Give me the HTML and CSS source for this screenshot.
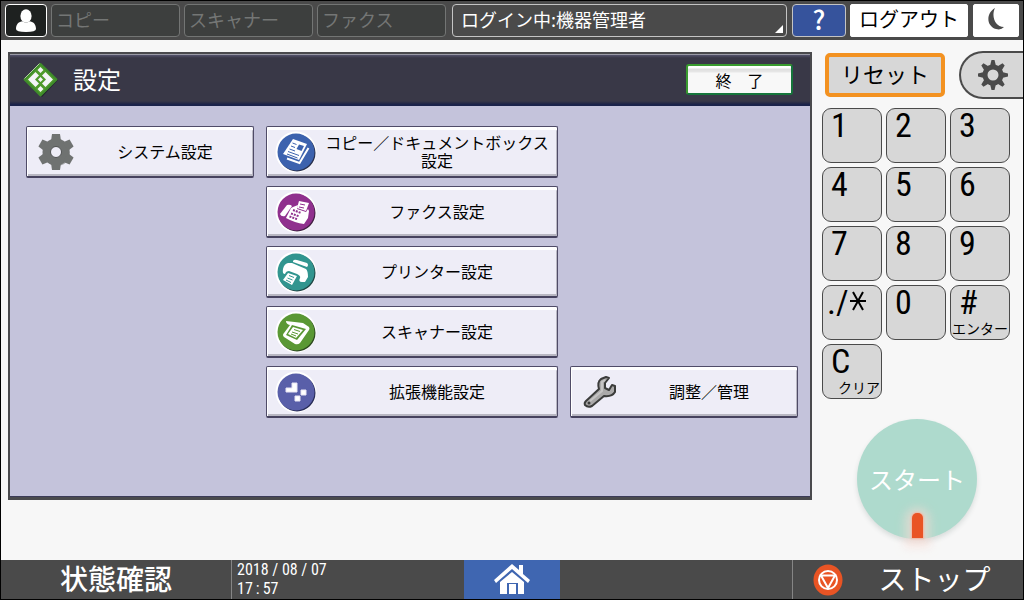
FILE: index.html
```html
<!DOCTYPE html>
<html lang="ja">
<head>
<meta charset="utf-8">
<meta name="viewport" content="width=device-width, initial-scale=1">
<title>設定</title>
<link rel="stylesheet" href="styles.css">
</head>
<body>
<div class="screen">
  <header class="topbar">
    <button class="user" type="button" aria-label="ユーザー">
      <svg width="24" height="26" viewBox="0 0 24 26" fill="#fff"><ellipse cx="12" cy="8" rx="5.6" ry="6.8"/><path d="M2 21C2 16 5 13.600 8.500 13.300Q12 16 15.500 13.300C19 13.600 22 16 22 21Q22 24 12 24T2 21Z"/></svg>
    </button>
    <button class="tab" type="button" disabled>コピー</button>
    <button class="tab" type="button" disabled>スキャナー</button>
    <button class="tab" type="button" disabled>ファクス</button>
    <button class="login" type="button">ログイン中:機器管理者</button>
    <button class="help" type="button">?</button>
    <button class="logout" type="button">ログアウト</button>
    <button class="sleep" type="button" aria-label="スリープ">
      <svg width="18" height="24" viewBox="0 0 18 24"><path d="M8 1C-1 6-1 19 9 22Q14 23.500 17 20C8 20 4 9 8 1Z" fill="#4a4a4a"/></svg>
    </button>
  </header>

  <div class="content">
    <main class="panel">
      <div class="panel-head">
        <svg width="36" height="36" viewBox="0 0 36 36">
          <path d="M19 2.500L35 18 19 35 3 20Z" fill="#20222b"/>
          <path d="M17.500 2L33.500 17.500 17.500 33.500 1.500 17.500Z" fill="#4f9a2c" stroke="#3f8c2b" stroke-width="2" stroke-linejoin="round"/>
          <path d="M16.500 1.500L1.500 16.500" stroke="#b3cfa2" stroke-width="1"/>
          <path d="M17.500 5L20.500 8 17.500 11 14.500 8Z M17.500 24L20.500 27 17.500 30 14.500 27Z" fill="#f4f4f8"/>
          <path d="M12.500 10L16 13.500 12 17.500 16 21.500 12.500 25 5 17.500Z M22.500 10L30 17.500 22.500 25 19 21.500 23 17.500 19 13.500Z M17.500 15L20 17.500 17.500 20 15 17.500Z" fill="#f4f4f8"/>
        </svg>
        <h1>設定</h1>
        <button class="done" type="button">終　了</button>
      </div>

      <div class="menu">
        <div class="column">
          <button class="item" type="button">
            <svg width="38" height="38" viewBox="0 0 38 38">
              <circle cx="20" cy="20" r="13" fill="#a9abae"/>
              <g fill="#6f7271"><circle cx="19" cy="19" r="13.500"/>
              <path d="M14 8L15 1H23L24 8Z"/><path d="M14 8L15 1H23L24 8Z" transform="rotate(60 19 19)"/><path d="M14 8L15 1H23L24 8Z" transform="rotate(120 19 19)"/><path d="M14 8L15 1H23L24 8Z" transform="rotate(180 19 19)"/><path d="M14 8L15 1H23L24 8Z" transform="rotate(240 19 19)"/><path d="M14 8L15 1H23L24 8Z" transform="rotate(300 19 19)"/></g>
              <circle cx="19" cy="19" r="5.500" fill="#eeedf7" stroke="#4f5151"/>
            </svg>
            <span>システム設定</span>
          </button>
        </div>

        <div class="column">
          <button class="item" type="button">
            <svg width="42" height="42" viewBox="0 0 42 42">
              <circle cx="21" cy="21" r="20.500" fill="#fff"/><circle cx="22" cy="22" r="18.500" fill="#29304e"/><circle cx="21" cy="21" r="18.500" fill="#3c62ae"/>
              <path d="M18 8L32 13 24 29 8 23Z" fill="#fff"/>
              <path d="M33.500 17L24.500 32 12 27.500" fill="none" stroke="#fff" stroke-width="2"/>
              <path d="M24 13.500L29 15 26.500 20 21.500 18Z" fill="#3c62ae"/>
              <path d="M17.500 12L21.500 13.500M16 15L20 16.500M14.500 18L20 20M13 20.500L24 24.500M12 23L22.500 27" stroke="#3c62ae"/>
            </svg>
            <span>コピー／ドキュメントボックス<br>設定</span>
          </button>
          <button class="item" type="button">
            <svg width="42" height="42" viewBox="0 0 42 42">
              <circle cx="21" cy="21" r="20.500" fill="#fff"/><circle cx="22" cy="22" r="18.500" fill="#412044"/><circle cx="21" cy="21" r="18.500" fill="#90308e"/>
              <path d="M12 14Q15 13 17 15L10 25Q6 26 5 23Z" fill="#fff"/>
              <path d="M18 16L23 14 22 18 31 21 33 18 34 20 33 27 29 33Q20 32 11 27Q13 23 16 17Z" fill="#fff"/>
              <path d="M24 10L34 12 31 20 22 17Z" fill="#fff"/>
              <path d="M25 13L30 14M24 16L29 17" stroke="#90308e"/>
              <path d="M18 19L26 22M16 22.500L24.500 25.500M14.500 25.500L23 28.500" stroke="#90308e" stroke-width="2" stroke-dasharray="2 1"/>
            </svg>
            <span>ファクス設定</span>
          </button>
          <button class="item" type="button">
            <svg width="42" height="42" viewBox="0 0 42 42">
              <circle cx="21" cy="21" r="20.500" fill="#fff"/><circle cx="22" cy="22" r="18.500" fill="#204646"/><circle cx="21" cy="21" r="18.500" fill="#31958f"/>
              <path d="M18 10Q19 8 22 9L32 12Q34 14 32 16L18 11Z" fill="#fff"/>
              <path d="M13 12H17L31 18Q33 20 33 26L30 31H27Q23 31 25 27Q26 25 22 23L14 20Q11 20 10 23Q7 23 8 18Q9 13 13 12Z" fill="#fff"/>
              <path d="M13 22L22 25 17 34 8 29Z" fill="#fff"/>
              <path d="M14 24.500L19 26.500M12.500 27L17.500 29M11 29L16 31.500" stroke="#31958f"/>
            </svg>
            <span>プリンター設定</span>
          </button>
          <button class="item" type="button">
            <svg width="42" height="42" viewBox="0 0 42 42">
              <circle cx="21" cy="21" r="20.500" fill="#fff"/><circle cx="22" cy="22" r="18.500" fill="#2c4721"/><circle cx="21" cy="21" r="18.500" fill="#5a9834"/>
              <path d="M11 10L28 12 34 16Q35 18 34 19L25 32Q23 34 20 33L9 26Q7 24 9 22L15 14Q11 13 11 10Z" fill="#fff"/>
              <path d="M17 14L31 18 22 29 11 24Z" fill="#5a9834"/>
              <path d="M18 16L28 19 21 27 13 23Z" fill="#fff"/>
              <path d="M19 18.500L25 20.500M17 21L23 23M16 23L21 25" stroke="#5a9834"/>
            </svg>
            <span>スキャナー設定</span>
          </button>
          <button class="item" type="button">
            <svg width="42" height="42" viewBox="0 0 42 42">
              <circle cx="21" cy="21" r="20.500" fill="#fff"/><circle cx="22" cy="22" r="18.500" fill="#292d58"/><circle cx="21" cy="21" r="18.500" fill="#595fa9"/>
              <path d="M17 12H22V21H11V17H17ZM26 19H31V24H26ZM20 25H25V30H20Z" fill="#fff" stroke="#e8e5f4"/>
            </svg>
            <span>拡張機能設定</span>
          </button>
        </div>

        <div class="column end">
          <button class="item" type="button">
            <svg width="38" height="38" viewBox="0 0 38 38">
              <path d="M5 28L18 16Q16 9 20 6L25 4 28 5 24 10V15L28 17 31 12 34 13V19Q31 24 23 23L11 33Q7 35 4 32Q3 30 5 28Z" fill="#aaa9a9" stroke="#3b3c3b" stroke-width="2" stroke-linejoin="round"/>
              <path d="M9 28L21 18V9L24 7" fill="none" stroke="#c5c4c4" stroke-width="2"/>
              <circle cx="8" cy="30" r="1.500" fill="#3b3c3b"/>
            </svg>
            <span>調整／管理</span>
          </button>
        </div>
      </div>
    </main>

    <aside class="side">
      <div class="side-top">
        <button class="reset" type="button">リセット</button>
        <button class="gear" type="button" aria-label="設定">
          <svg width="30" height="30" viewBox="0 0 30 30">
            <circle cx="15" cy="15" r="8" fill="none" stroke="#4a4a4a" stroke-width="5"/>
            <g fill="#4a4a4a"><path d="M12 6L13.500 0H16.500L18 6Z"/><path d="M12 6L13.500 0H16.500L18 6Z" transform="rotate(45 15 15)"/><path d="M12 6L13.500 0H16.500L18 6Z" transform="rotate(90 15 15)"/><path d="M12 6L13.500 0H16.500L18 6Z" transform="rotate(135 15 15)"/><path d="M12 6L13.500 0H16.500L18 6Z" transform="rotate(180 15 15)"/><path d="M12 6L13.500 0H16.500L18 6Z" transform="rotate(225 15 15)"/><path d="M12 6L13.500 0H16.500L18 6Z" transform="rotate(270 15 15)"/><path d="M12 6L13.500 0H16.500L18 6Z" transform="rotate(315 15 15)"/></g>
          </svg>
        </button>
      </div>
      <div class="keypad">
        <button class="key" type="button">1</button>
        <button class="key" type="button">2</button>
        <button class="key" type="button">3</button>
        <button class="key" type="button">4</button>
        <button class="key" type="button">5</button>
        <button class="key" type="button">6</button>
        <button class="key" type="button">7</button>
        <button class="key" type="button">8</button>
        <button class="key" type="button">9</button>
        <button class="key symbol" type="button">./<svg width="18" height="30" viewBox="0 0 18 30" role="img" aria-label="アスタリスク"><path d="M1 15H17M4 6L14 24M14 6L4 24" stroke="#000" stroke-width="2"/></svg></button>
        <button class="key" type="button">0</button>
        <button class="key" type="button">#<small>エンター</small></button>
        <button class="key" type="button">C<small>クリア</small></button>
      </div>
      <button class="start" type="button">スタート<i class="lamp"></i></button>
    </aside>
  </div>

  <footer class="bottombar">
    <button class="status" type="button">状態確認</button>
    <time class="clock" datetime="2018-08-07T17:57">2018 / 08 / 07<br>17&thinsp;:&thinsp;57</time>
    <button class="home" type="button" aria-label="ホーム">
      <svg width="36" height="31" viewBox="0 0 36 31" fill="#fff"><path d="M0 16L18 0 25 6V1H29V10L36 16 34 19 18 5 2 19Z"/><path d="M6 18L18 8 30 18V30H24V19H13V30H6Z"/><path d="M15 20H22V30H15Z"/></svg>
    </button>
    <button class="stop" type="button">
      <svg width="30" height="32" viewBox="0 0 30 32"><ellipse cx="15" cy="16" rx="14.500" ry="15.500" fill="#e95424"/><circle cx="15" cy="16" r="9" fill="none" stroke="#fff" stroke-width="2"/><path d="M8 11.500H22L15 24Z" fill="none" stroke="#fff" stroke-width="2"/></svg>
      <span>ストップ</span>
    </button>
  </footer>
</div>
</body>
</html>
```

FILE: styles.css
```css
* {
  box-sizing: border-box;
}

body {
  margin: 0;
  font-family: "Noto Sans CJK JP", sans-serif;
  color: #000;
}

button {
  margin: 0;
  padding: 0;
  border: 0;
  border-radius: 0;
  background: none;
  color: inherit;
  font: inherit;
}

svg {
  display: block;
  flex: none;
}

.screen {
  display: flex;
  flex-direction: column;
  min-height: 100vh;
  border: 1px solid #000;
  background: #f7f7f7;
}

/* Top bar */
.topbar {
  display: grid;
  grid-template-columns: 42px 129fr 129fr 129fr 338fr 54px 118px 47px;
  gap: 4px;
  padding: 3px 4px;
  height: 39px;
  background: #4a4a4a;
  font-size: 18px;
  line-height: 26px;
}

.topbar button {
  padding-bottom: 4px;
  border: 1px solid #c4c4c4;
  border-radius: 4px;
}

.topbar .user {
  display: flex;
  align-items: center;
  justify-content: center;
  padding: 0;
  background: #1e2120;
  border-color: #fff;
}

.topbar .tab {
  padding-left: 4px;
  border-color: #737574;
  background: #3d3f3e;
  color: #747675;
  text-align: left;
}

.topbar .login {
  position: relative;
  margin: 0 1px 0 2px;
  padding-left: 8px;
  color: #fff;
  text-align: left;
}

.login::after {
  content: "";
  position: absolute;
  right: 3px;
  bottom: 3px;
  border: 4px solid #fff;
  border-top-color: transparent;
  border-left-color: transparent;
}

.topbar .help {
  background: #36539c;
  color: #fff;
  font-size: 26px;
  font-weight: 500;
}

.topbar .logout,
.topbar .sleep {
  border-color: #fff;
  border-radius: 2px;
  background: #fff;
  font-size: 20px;
}

.topbar .sleep {
  display: flex;
  align-items: center;
  justify-content: center;
  margin-left: 1px;
}

/* Content */
.content {
  display: flex;
  flex: 1;
  gap: 9px;
  padding: 12px 0 0 7px;
}

.panel {
  flex: 1;
  align-self: flex-start;
  border: 2px solid #4a4a4d;
  border-bottom-width: 3px;
  background: #c4c3db;
}

.panel-head {
  display: flex;
  align-items: center;
  gap: 14px;
  height: 52px;
  padding: 0 17px 0 13px;
  border-top: 1px solid #9a9aa6;
  border-bottom: 2px solid #1b234a;
  background: linear-gradient(#54526c, #393847 3px, #393847 46px, #1f2547);
}

.panel-head h1 {
  flex: 1;
  margin: 0;
  padding-bottom: 2px;
  color: #fff;
  font-size: 24px;
  font-weight: 400;
  line-height: 32px;
}

.done {
  width: 107px;
  height: 31px;
  border: 2px solid #15753b;
  border-radius: 3px;
  border-top-color: #399b2f;
  border-left-color: #399b2f;
  background: linear-gradient(#fff 2px, #dedede 3px, #e8e8e8 6px, #f8f8f8 7px);
  font-size: 16px;
  line-height: 26px;
}

.menu {
  display: grid;
  grid-template-columns: 228fr 292fr 228fr;
  gap: 12px;
  padding: 20px 12px 78px 16px;
  border-bottom: 1px solid #3c3b58;
}

.column {
  display: flex;
  flex-direction: column;
  gap: 8px;
}

.column.end {
  justify-content: flex-end;
}

.item {
  display: flex;
  align-items: center;
  justify-content: center;
  height: 52px;
  padding-left: 8px;
  border: 1px solid #4f4b67;
  border-bottom: 2px solid #46425e;
  border-radius: 2px;
  background: #eeedf7;
  box-shadow: inset 0 3px #fff, inset 1px 0 #fff, inset -1px -2px #b8b7c2;
  font-size: 16px;
  line-height: 18px;
}

.item svg {
  width: 42px;
}

.item span {
  flex: 1;
  padding-bottom: 2px;
}

/* Right-hand controls */
.side {
  display: flex;
  flex-direction: column;
  width: 202px;
}

.side-top {
  display: flex;
  justify-content: space-between;
  align-items: center;
  height: 46px;
  padding-left: 4px;
}

.reset {
  width: 120px;
  height: 44px;
  padding-bottom: 4px;
  border: 4px solid #f39221;
  border-radius: 5px;
  background: #d7d7d7;
  font-size: 22px;
  line-height: 32px;
}

.gear {
  display: flex;
  align-items: center;
  width: 64px;
  height: 48px;
  padding-left: 17px;
  border: 2px solid #4a4a4a;
  border-right: 0;
  border-radius: 24px 0 0 24px;
  background: #d7d7d7;
}

.keypad {
  display: grid;
  grid-template-columns: repeat(3, 60px);
  grid-auto-rows: 55px;
  gap: 4px;
  padding: 10px 0 0 1px;
}

.key {
  display: flex;
  flex-direction: column;
  justify-content: space-between;
  padding: 0 1px 2px 8px;
  border: 1px solid #4a4a4a;
  border-radius: 9px;
  background: #d7d7d7;
  font-family: "Liberation Sans Narrow", "Roboto Condensed", "Noto Sans CJK JP", sans-serif;
  font-size: 34px;
  line-height: 32px;
  text-align: left;
}

.key.symbol {
  flex-direction: row;
  justify-content: flex-start;
  padding-left: 4px;
}

.key small {
  align-self: flex-end;
  font-family: "Noto Sans CJK JP", sans-serif;
  font-size: 14px;
  line-height: 18px;
  white-space: nowrap;
}

.start {
  position: relative;
  width: 120px;
  height: 120px;
  margin: 20px 0 20px 36px;
  border-radius: 50%;
  background: #aedacd;
  box-shadow: 0 3px 5px #d9dddc;
  color: #fff;
  font-size: 24px;
  line-height: 32px;
}

.lamp {
  position: absolute;
  left: 55px;
  bottom: 1px;
  width: 11px;
  height: 25px;
  border-radius: 5px 5px 0 0;
  background: #e95424;
  box-shadow: 0 0 2px 1px #f4b5a0, 0 2px 10px 7px #f8dbd299;
}

/* Bottom bar */
.bottombar {
  display: grid;
  grid-template-columns: 231fr 232fr 96px 463fr;
  height: 39px;
  background: #4a4a4a;
  color: #fff;
}

.status {
  padding-bottom: 3px;
  border-right: 1px solid #858585;
  font-size: 28px;
  font-weight: 500;
  line-height: 36px;
}

.clock {
  padding-left: 5px;
  font-family: "Liberation Sans Narrow", "Roboto Condensed", "Noto Sans CJK JP", sans-serif;
  font-size: 16px;
  line-height: 19px;
}

.home {
  display: flex;
  align-items: center;
  justify-content: center;
  background: #3f66b1;
}

.stop {
  display: flex;
  align-items: center;
  justify-self: end;
  gap: 36px;
  width: 50%;
  padding-left: 20px;
  border-left: 1px solid #858585;
  font-size: 28px;
  line-height: 36px;
}

.stop span {
  padding-bottom: 3px;
}
```
